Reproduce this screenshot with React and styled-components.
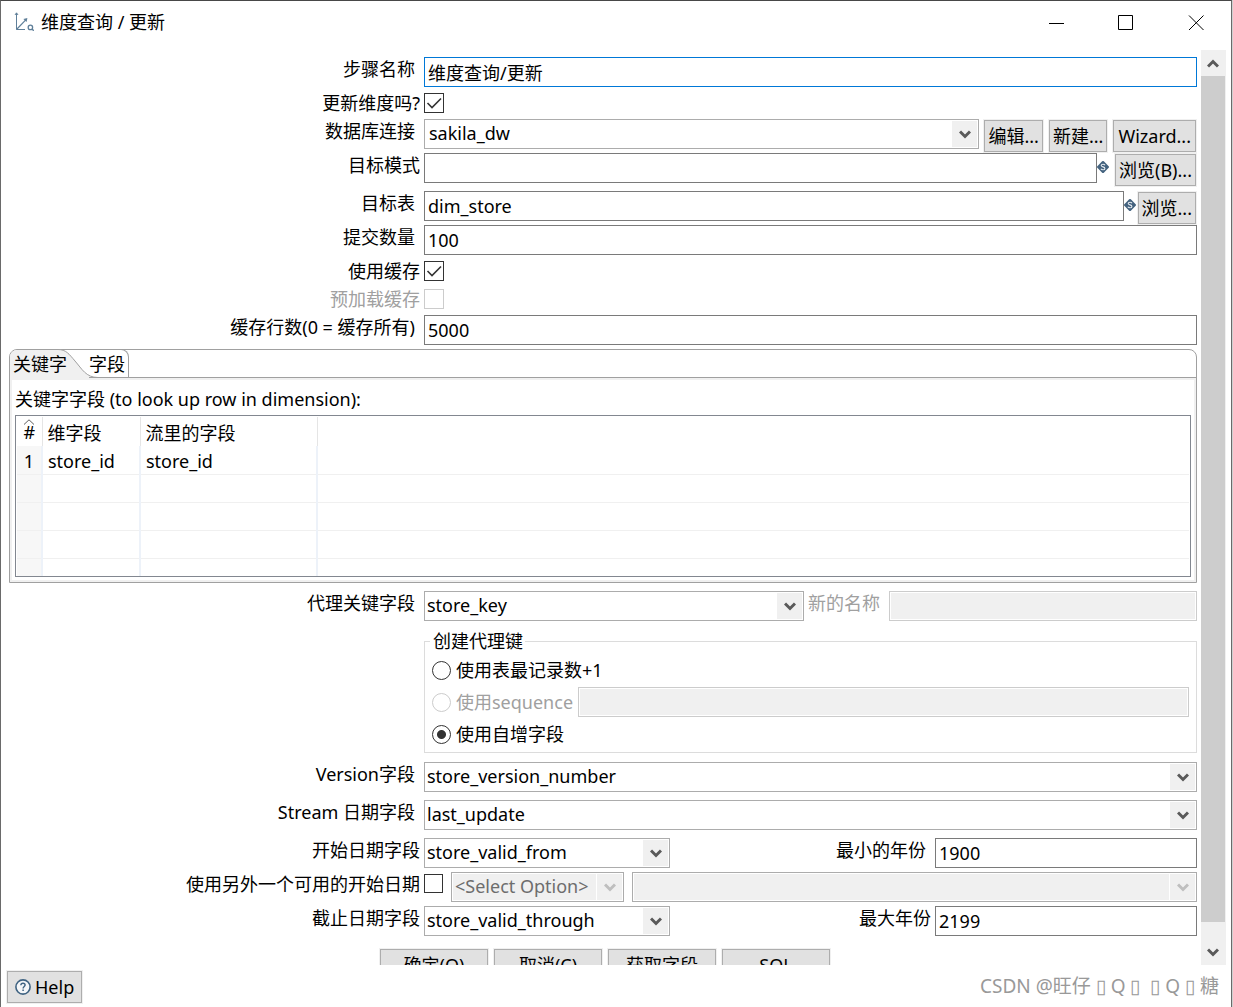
import React from "react";
import styled, { createGlobalStyle } from "styled-components";

const ChevronDown = ({ muted }) => (
  <svg width="12" height="9" viewBox="0 0 12 9">
    <path d="M1 1.5L6 6.5L11 1.5" fill="none" stroke={muted ? "#bfbfbf" : "#5a5a5a"} strokeWidth="3" />
  </svg>
);

const ChevronUp = () => (
  <svg width="12" height="9" viewBox="0 0 12 9">
    <path d="M1 7.5L6 2.5L11 7.5" fill="none" stroke="#5a5a5a" strokeWidth="3" />
  </svg>
);

const VariableIcon = ({ width }) => (
  <VariableMark $width={width}>
    <svg width="12" height="12" viewBox="0 0 12 12">
      <path d="M6 1.2L10.8 6L6 10.8L1.2 6Z" fill="#44637f" stroke="#44637f" strokeWidth="2.4" strokeLinejoin="round" />
      <path
        d="M8 4.2C7.6 3.4 6.9 3.2 6 3.2C4.9 3.2 4.2 3.7 4.2 4.5C4.2 6.2 7.9 5.5 7.9 7.4C7.9 8.3 7.1 8.8 6 8.8C5 8.8 4.3 8.5 3.9 7.7"
        fill="none"
        stroke="#e4eaf0"
        strokeWidth="1.1"
      />
    </svg>
  </VariableMark>
);

const StepIcon = () => (
  <svg width="20" height="20" viewBox="0 0 20 20" fill="none" stroke="#5f7f99">
    <path d="M2.5 2V18.5H11" strokeWidth="1" />
    <path d="M1 4L2.5 1.8L4 4" strokeWidth="1" />
    <path d="M2.5 18.5L12 8.6" strokeWidth="1.2" />
    <path d="M9.4 8L13.4 7L12.6 11Z" fill="#5f7f99" stroke="none" />
    <circle cx="16.4" cy="16.4" r="2.2" strokeWidth="1.3" />
    <path d="M18 18L19.8 19.8" strokeWidth="1.4" />
  </svg>
);

const HelpIcon = () => (
  <svg width="16" height="16" viewBox="0 0 16 16" fill="none" stroke="#3f6382">
    <circle cx="8" cy="8" r="7.1" fill="#f4f6f8" strokeWidth="1.6" />
    <path d="M5.9 6.3C5.9 5 6.8 4.3 8 4.3C9.2 4.3 10.1 5 10.1 6.1C10.1 7.4 8.1 7.6 8.1 9.4" strokeWidth="1.4" />
    <path d="M8.1 10.6V12" strokeWidth="1.5" />
  </svg>
);

const Combo = ({ id, value, disabled, indent, width, label }) => (
  <ComboBox $width={width} $disabled={disabled}>
    <ComboSelect id={id} disabled={disabled} $indent={indent} aria-label={label} defaultValue={value}>
      <option>{value}</option>
    </ComboSelect>
    <ComboArrow>
      <ChevronDown muted={disabled} />
    </ComboArrow>
  </ComboBox>
);

const Field = ({ id, label, gap, tight, children }) => (
  <Row $gap={gap}>
    <RowLabel htmlFor={id} $tight={tight}>
      {label}
    </RowLabel>
    <RowBody>{children}</RowBody>
  </Row>
);

const CheckField = ({ id, label, gap, checked, disabled }) => (
  <Row $gap={gap}>
    <RowLabel htmlFor={id} $tight $short $disabled={disabled}>
      {label}
    </RowLabel>
    <RowBody>
      <CheckBox id={id} type="checkbox" defaultChecked={checked} disabled={disabled} />
    </RowBody>
  </Row>
);

const emptyRows = [2, 3, 4, 5];

const App = () => {
  return (
    <>
      <GlobalStyle />
      <Desktop>
        <Window>
          <TitleBar>
            <StepIcon />
            <Title>维度查询 / 更新</Title>
            <WindowButton aria-label="Minimize">
              <svg width="16" height="16" viewBox="0 0 16 16">
                <path d="M1 8.5H16" stroke="#000" />
              </svg>
            </WindowButton>
            <WindowButton aria-label="Maximize">
              <svg width="16" height="16" viewBox="0 0 16 16">
                <path d="M0.5 0.5H14.5V14.5H0.5Z" fill="none" stroke="#000" />
              </svg>
            </WindowButton>
            <WindowButton aria-label="Close">
              <svg width="16" height="16" viewBox="0 0 16 16">
                <path d="M1 0.5L15.5 15M15.5 0.5L1 15" stroke="#000" />
              </svg>
            </WindowButton>
          </TitleBar>

          <Viewport>
            <Form>
              <Field id="step" label="步骤名称" gap={6}>
                <TextInput id="step" defaultValue="维度查询/更新" $active />
              </Field>
              <CheckField id="update" label="更新维度吗?" gap={6} checked />
              <Field id="connection" label="数据库连接" gap={0}>
                <Combo id="connection" value="sakila_dw" indent={4} />
                <ButtonGroup>
                  <Button>编辑...</Button>
                  <Button>新建...</Button>
                  <Button $wide>Wizard...</Button>
                </ButtonGroup>
              </Field>
              <Field id="schema" label="目标模式" gap={4} tight>
                <TextInput id="schema" />
                <VariableIcon width={17} />
                <Button>浏览(B)...</Button>
              </Field>
              <Field id="table" label="目标表" gap={0}>
                <TextInput id="table" defaultValue="dim_store" />
                <VariableIcon width={13} />
                <Button>浏览...</Button>
              </Field>
              <Field id="commit" label="提交数量" gap={6}>
                <TextInput id="commit" defaultValue="100" />
              </Field>
              <CheckField id="cache" label="使用缓存" gap={8} checked />
              <CheckField id="preload" label="预加载缓存" gap={6} disabled />
              <Field id="rows" label="缓存行数(0 = 缓存所有)" gap={4}>
                <TextInput id="rows" defaultValue="5000" />
              </Field>

              <TabFolder>
                <TabStrip role="tablist">
                  <ActiveTab type="button" role="tab" aria-selected="true">
                    关键字
                  </ActiveTab>
                  <TabCurve width="46" height="29" viewBox="0 0 46 29">
                    <path d="M0 0.5H6C14 0.5 17 5 23 12C30 20 34 28.5 44 28.5V29H0Z" fill="#f0f0f0" />
                    <path d="M0 0.5H6C14 0.5 17 5 23 12C30 20 34 28.5 46 28.5" fill="none" stroke="#a0a0a0" />
                  </TabCurve>
                  <Tab type="button" role="tab" aria-selected="false">
                    字段
                  </Tab>
                  <TabRest />
                </TabStrip>
                <TabPanel role="tabpanel">
                  <PanelTitle>关键字字段 (to look up row in dimension):</PanelTitle>
                  <TableFrame>
                    <KeyTable>
                      <colgroup>
                        <NumberCol />
                        <DimensionCol />
                        <StreamCol />
                        <col />
                      </colgroup>
                      <thead>
                        <tr>
                          <NumberHead>
                            <svg width="12" height="6" viewBox="0 0 12 6">
                              <path d="M1 5.5L6 0.8L11 5.5" fill="none" stroke="#606060" />
                            </svg>
                            #
                          </NumberHead>
                          <HeadCell>维字段</HeadCell>
                          <HeadCell>流里的字段</HeadCell>
                          <HeadCell />
                        </tr>
                      </thead>
                      <tbody>
                        <tr>
                          <NumberCell>1</NumberCell>
                          <Cell>store_id</Cell>
                          <Cell>store_id</Cell>
                          <Cell />
                        </tr>
                        {emptyRows.map((n) => (
                          <tr key={n}>
                            <NumberCell />
                            <Cell />
                            <Cell />
                            <Cell />
                          </tr>
                        ))}
                      </tbody>
                    </KeyTable>
                  </TableFrame>
                </TabPanel>
              </TabFolder>

              <Field id="technical" label="代理关键字段" gap={9}>
                <Combo id="technical" value="store_key" indent={2} width="380px" />
                <InlineLabel htmlFor="newname" $disabled>
                  新的名称
                </InlineLabel>
                <TextInput id="newname" disabled />
              </Field>

              <Row $gap={9}>
                <RowLabel as="span" />
                <RowBody>
                  <KeyGroup>
                    <KeyLegend>创建代理键</KeyLegend>
                    <RadioRow>
                      <Radio type="radio" name="creation" id="max" />
                      <RadioLabel htmlFor="max">使用表最记录数+1</RadioLabel>
                    </RadioRow>
                    <RadioRow>
                      <Radio type="radio" name="creation" id="sequence" disabled />
                      <RadioLabel htmlFor="sequence" $disabled>
                        使用sequence
                      </RadioLabel>
                      <TextInput disabled aria-label="sequence" />
                    </RadioRow>
                    <RadioRow>
                      <Radio type="radio" name="creation" id="auto" defaultChecked />
                      <RadioLabel htmlFor="auto">使用自增字段</RadioLabel>
                    </RadioRow>
                  </KeyGroup>
                </RowBody>
              </Row>

              <Field id="version" label="Version字段" gap={8}>
                <Combo id="version" value="store_version_number" indent={2} />
              </Field>
              <Field id="stream" label="Stream 日期字段" gap={8}>
                <Combo id="stream" value="last_update" indent={2} />
              </Field>
              <Field id="from" label="开始日期字段" gap={4} tight>
                <Combo id="from" value="store_valid_from" indent={2} width="246px" />
                <YearLabel htmlFor="minyear" $space={9}>
                  最小的年份
                </YearLabel>
                <YearInput id="minyear" defaultValue="1900" />
              </Field>
              <Field id="alternative" label="使用另外一个可用的开始日期" gap={4} tight>
                <AlternativeGroup>
                  <CheckBox id="alternative" type="checkbox" />
                  <Combo label="Select Option" value="<Select Option>" indent={3} width="173px" disabled />
                  <Combo label="日期字段" value="" indent={3} disabled />
                </AlternativeGroup>
              </Field>
              <Field id="to" label="截止日期字段" gap={12} tight>
                <Combo id="to" value="store_valid_through" indent={2} width="246px" />
                <YearLabel htmlFor="maxyear" $space={4}>
                  最大年份
                </YearLabel>
                <YearInput id="maxyear" defaultValue="2199" />
              </Field>

              <Actions>
                <ActionButton>确定(O)</ActionButton>
                <ActionButton>取消(C)</ActionButton>
                <ActionButton>获取字段</ActionButton>
                <ActionButton>SQL</ActionButton>
              </Actions>
            </Form>

            <ScrollBar>
              <ScrollButton aria-label="Scroll up">
                <ChevronUp />
              </ScrollButton>
              <ScrollTrack>
                <ScrollThumb />
              </ScrollTrack>
              <ScrollButton aria-label="Scroll down">
                <ChevronDown />
              </ScrollButton>
            </ScrollBar>
          </Viewport>

          <Footer>
            <HelpButton>
              <HelpIcon />
              Help
            </HelpButton>
            <Watermark>CSDN @旺仔 ▯ Q ▯&nbsp; ▯ Q ▯ 糖</Watermark>
          </Footer>
        </Window>
      </Desktop>
    </>
  );
};

export default App;

const GlobalStyle = createGlobalStyle`
  * {
    box-sizing: border-box;
  }

  body {
    margin: 0;
    background: #fff;
    color: #000;
  }

  body, input, select, button {
    font-family: "Noto Sans", "Noto Sans CJK SC", sans-serif;
    font-size: 18px;
  }
`;

const Desktop = styled.div`
  height: 100vh;
  padding-right: 1px;
  background: #d0d0d0;
`;

const Window = styled.div`
  height: 100%;
  display: flex;
  flex-direction: column;
  background: #fff;
  border: 1px solid #6a6a6a;
  border-top-color: #484848;
  border-bottom: 0;
`;

const TitleBar = styled.header`
  height: 49px;
  flex: none;
  display: flex;
  align-items: flex-start;
  padding: 10px 0 0 13px;
`;

const Title = styled.h1`
  flex: 1;
  margin: 0 0 0 7px;
  font-size: 18px;
  font-weight: 400;
  line-height: 22px;
`;

const WindowButton = styled.button`
  width: 70px;
  height: 24px;
  padding: 0;
  border: 0;
  background: none;
  display: flex;
  align-items: center;
  justify-content: center;
`;

const Viewport = styled.main`
  flex: 1;
  min-height: 0;
  display: flex;
  overflow: hidden;
  padding-right: 5px;
`;

const Form = styled.form`
  flex: 1;
  min-width: 0;
  padding-top: 7px;
`;

const Row = styled.div`
  display: flex;
  align-items: flex-start;
  margin-bottom: ${({ $gap }) => $gap}px;
`;

const RowLabel = styled.label`
  flex: 0 0 35%;
  padding-right: ${({ $tight }) => ($tight ? 1 : 6)}px;
  text-align: right;
  line-height: ${({ $short }) => ($short ? 20 : 24)}px;
  white-space: nowrap;
  color: ${({ $disabled }) => ($disabled ? "#a0a0a0" : "#000")};
`;

const RowBody = styled.div`
  flex: 1;
  min-width: 0;
  display: flex;
  align-items: flex-start;
  padding: 0 4px 0 3px;
`;

const TextInput = styled.input`
  flex: 1;
  min-width: 0;
  height: 30px;
  margin: 0;
  padding: 0 3px;
  outline: 0;
  background: #fff;
  border: 1px solid ${({ $active }) => ($active ? "#0078d7" : "#7a7a7a")};

  &:disabled {
    background: #f0f0f0;
    border-color: #cccccc;
    box-shadow: inset 0 0 0 1px #fff;
  }
`;

const ComboBox = styled.div`
  flex: ${({ $width }) => ($width ? `0 0 ${$width}` : 1)};
  min-width: 0;
  height: 30px;
  display: grid;
  border: 1px solid #acacac;
  background: ${({ $disabled }) => ($disabled ? "#f0f0f0" : "#fff")};
  box-shadow: inset 0 0 0 1px #fff;
`;

const ComboSelect = styled.select`
  grid-area: 1 / 1;
  width: 100%;
  padding: 0 26px 2px ${({ $indent }) => $indent}px;
  appearance: none;
  border: 0;
  outline: 0;
  background: none;
  color: #000;

  &:disabled {
    color: #6d6d6d;
    opacity: 1;
  }
`;

const ComboArrow = styled.span`
  grid-area: 1 / 1;
  justify-self: end;
  width: 26px;
  margin: 1px;
  display: flex;
  align-items: center;
  justify-content: center;
  background: #f0f0f0;
  border-left: 1px solid #fff;
  pointer-events: none;
`;

const CheckBox = styled.input`
  appearance: none;
  width: 20px;
  height: 20px;
  margin: 0;
  flex: none;
  border: 1px solid #333;
  background: #fff;

  &:checked {
    background: #fff
      url("data:image/svg+xml,%3Csvg xmlns='http://www.w3.org/2000/svg' viewBox='0 0 18 18'%3E%3Cpath d='M2.5 9L7 13.5L16 4.5' fill='none' stroke='%23333' stroke-width='1.6'/%3E%3C/svg%3E");
  }

  &:disabled {
    border-color: #cccccc;
  }
`;

const Button = styled.button.attrs({ type: "button" })`
  height: 32px;
  flex: none;
  margin: 1px;
  padding: 0 ${({ $wide }) => ($wide ? 4 : 3)}px;
  border: 1px solid #adadad;
  outline: 1px solid #f0f0f0;
  background: #e1e1e1;
  color: #000;
  line-height: 30px;
  white-space: nowrap;
`;

const ButtonGroup = styled.div`
  display: flex;
  gap: 4px;
  margin-left: 4px;
`;

const VariableMark = styled.span`
  flex: none;
  width: ${({ $width }) => $width}px;
  height: 28px;
  display: flex;
  align-items: center;

  svg {
    flex: none;
  }
`;

const TabFolder = styled.section`
  margin: 0 4px 8px 8px;
  border: 1px solid #a0a0a0;
  border-radius: 8px 8px 0 0;
`;

const TabStrip = styled.div`
  display: flex;
  height: 29px;
  margin-top: -1px;
`;

const ActiveTab = styled.button`
  margin: 1px 0 0;
  padding: 0 0 0 3px;
  width: 42px;
  overflow: visible;
  white-space: nowrap;
  border: 0;
  border-radius: 7px 0 0 0;
  background: #f0f0f0;
  line-height: 28px;
  text-align: left;
  position: relative;
  z-index: 1;
`;

const TabCurve = styled.svg`
  flex: none;
`;

const Tab = styled.button`
  margin: 0 0 0 -9px;
  padding: 1px 3px 0 0;
  border: 0;
  border-right: 1px solid #a0a0a0;
  border-top: 1px solid #a0a0a0;
  border-bottom: 1px solid #a0a0a0;
  border-radius: 0 8px 0 0;
  background: none;
  line-height: 26px;
`;

const TabRest = styled.span`
  flex: 1;
  border-bottom: 1px solid #a0a0a0;
`;

const TabPanel = styled.div`
  border: 2px solid #f0f0f0;
  padding: 7px 3px 3px;
`;

const PanelTitle = styled.div`
  line-height: 24px;
  margin-bottom: 4px;
`;

const TableFrame = styled.div`
  height: 162px;
  overflow: hidden;
  padding: 1px;
  border: 1px solid #828790;
`;

const KeyTable = styled.table`
  width: 100%;
  table-layout: fixed;
  border-collapse: collapse;
`;

const NumberCol = styled.col`
  width: 25px;
`;

const DimensionCol = styled.col`
  width: 98px;
`;

const StreamCol = styled.col`
  width: 177px;
`;

const HeadCell = styled.th`
  height: 29px;
  padding: 0 5px;
  border-right: 1px solid #e5e5e5;
  font-weight: 400;
  text-align: left;
  white-space: nowrap;

  &:last-child {
    border-right: 0;
  }
`;

const NumberHead = styled(HeadCell)`
  padding: 2px 0 0;
  text-align: center;
  vertical-align: top;
  line-height: 14px;

  svg {
    display: block;
    margin: 0 auto;
  }
`;

const Cell = styled.td`
  height: 28px;
  padding: 3px 5px 0;
  line-height: 24px;
  border-right: 2px solid #edf2f9;
  border-bottom: 1px solid #f0f0f0;

  &:last-child {
    border-right: 0;
  }
`;

const NumberCell = styled(Cell)`
  padding: 3px 0 0;
  text-align: center;
  background: #f7f7f7;
`;

const InlineLabel = styled.label`
  flex: none;
  padding: 0 9px 0 4px;
  line-height: 24px;
  color: ${({ $disabled }) => ($disabled ? "#a0a0a0" : "#000")};
`;

const KeyGroup = styled.fieldset`
  flex: 1;
  min-width: 0;
  margin: 0;
  padding: 2px 7px;
  border: 1px solid #dcdcdc;
`;

const KeyLegend = styled.legend`
  margin-left: -2px;
  padding: 0 2px 0 3px;
  line-height: 22px;
`;

const RadioRow = styled.div`
  height: 32px;
  display: flex;
  align-items: center;
`;

const Radio = styled.input`
  appearance: none;
  flex: none;
  width: 19px;
  height: 19px;
  margin: 0 5px 0 0;
  border: 1px solid #333;
  border-radius: 50%;
  background: #fff;

  &:checked {
    background: radial-gradient(circle, #333 4px, #fff 5px);
  }

  &:disabled {
    border-color: #cccccc;
  }
`;

const RadioLabel = styled.label`
  flex: none;
  margin-right: 5px;
  line-height: 28px;
  color: ${({ $disabled }) => ($disabled ? "#a0a0a0" : "#000")};
`;

const YearLabel = styled(InlineLabel)`
  flex: 1;
  padding-right: ${({ $space }) => $space}px;
  text-align: right;
`;

const YearInput = styled(TextInput)`
  flex: 0 0 262px;
`;

const AlternativeGroup = styled.div`
  flex: 1;
  display: flex;
  gap: 8px;

  ${CheckBox} {
    width: 19px;
    height: 19px;
    margin-top: 2px;
  }
`;

const Actions = styled.div`
  display: flex;
  justify-content: center;
  gap: 4px;
  padding-left: 8px;
`;

const ActionButton = styled(Button)`
  width: 108px;
`;

const ScrollBar = styled.div`
  width: 25px;
  flex: none;
  display: flex;
  flex-direction: column;
  background: #f0f0f0;
`;

const ScrollButton = styled.button`
  height: 26px;
  flex: none;
  padding: 0 1px 0 0;
  border: 0;
  background: none;
  display: flex;
  align-items: center;
  justify-content: center;
`;

const ScrollTrack = styled.div`
  flex: 1;
  padding-right: 1px;
`;

const ScrollThumb = styled.div`
  height: 98%;
  background: #cdcdcd;
`;

const Footer = styled.footer`
  height: 42px;
  flex: none;
  display: flex;
  align-items: flex-start;
  justify-content: space-between;
  padding: 5px 12px 0 5px;
`;

const HelpButton = styled(Button)`
  display: flex;
  align-items: center;
  gap: 4px;
  padding: 0 7px;
`;

const Watermark = styled.span`
  font-size: 19px;
  line-height: 32px;
  color: #999;
`;
